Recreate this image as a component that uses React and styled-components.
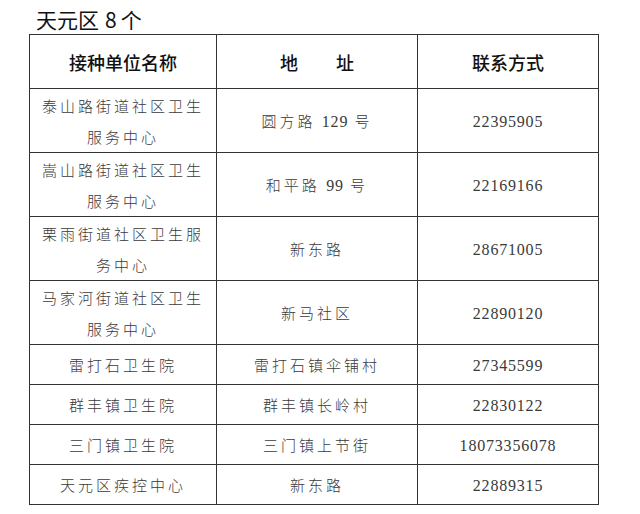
import React from 'react';
import styled, { createGlobalStyle } from 'styled-components';

const GlobalStyle = createGlobalStyle`
  html, body {
    margin: 0;
    padding: 0;
    background: #fff;
  }
  body {
    font-family: "Noto Sans CJK SC", "Noto Sans", sans-serif;
    color: #333;
  }
`;

const Page = styled.div`
  width: 640px;
  height: 514px;
  overflow: hidden;
`;

const Title = styled.div`
  height: 34px;
  padding-left: 36px;
  font-size: 21px;
  line-height: 38px;
  color: #111;
  box-sizing: border-box;
`;

const Count = styled.span`
  margin: 0 4px 0 6px;
`;

const Table = styled.table`
  margin-left: 29px;
  border-collapse: collapse;
  table-layout: fixed;
  width: 569px;
`;

const HeadCell = styled.th`
  height: 53px;
  border: 1px solid #333;
  font-size: 18px;
  font-weight: 500;
  color: #111;
  padding: 0;
  text-align: center;
  word-spacing: ${(p) => p.$spread || 0};
`;

const Cell = styled.td`
  height: ${(p) => (p.$tall ? '63px' : '39px')};
  border: 1px solid #333;
  padding: 0 6px;
  text-align: center;
  font-size: 15px;
  line-height: 31px;
  letter-spacing: 3px;
  color: #3a3a3a;
  font-weight: 300;
`;

const Num = styled.span`
  font-family: "Liberation Serif", "Times New Roman", serif;
  font-size: 16px;
  letter-spacing: 0.8px;
  font-weight: 400;
`;

const rows = [
  { name: ['泰山路街道社区卫生', '服务中心'], addr: ['圆方路 ', '129', ' 号'], tel: '22395905', tall: true },
  { name: ['嵩山路街道社区卫生', '服务中心'], addr: ['和平路 ', '99', ' 号'], tel: '22169166', tall: true },
  { name: ['栗雨街道社区卫生服', '务中心'], addr: ['新东路'], tel: '28671005', tall: true },
  { name: ['马家河街道社区卫生', '服务中心'], addr: ['新马社区'], tel: '22890120', tall: true },
  { name: ['雷打石卫生院'], addr: ['雷打石镇伞铺村'], tel: '27345599' },
  { name: ['群丰镇卫生院'], addr: ['群丰镇长岭村'], tel: '22830122' },
  { name: ['三门镇卫生院'], addr: ['三门镇上节街'], tel: '18073356078' },
  { name: ['天元区疾控中心'], addr: ['新东路'], tel: '22889315' },
];

const Address = ({ parts }) => {
  if (parts.length === 1) return <>{parts[0]}</>;
  return (
    <>
      {parts[0]}
      <Num>{parts[1]}</Num>
      {parts[2]}
    </>
  );
};

export default function App() {
  return (
    <Page>
      <GlobalStyle />
      <Title>
        天元区<Count>8</Count>个
      </Title>
      <Table>
        <colgroup>
          <col style={{ width: '187px' }} />
          <col style={{ width: '201px' }} />
          <col style={{ width: '181px' }} />
        </colgroup>
        <thead>
          <tr>
            <HeadCell>接种单位名称</HeadCell>
            <HeadCell $spread="34px">地 址</HeadCell>
            <HeadCell>联系方式</HeadCell>
          </tr>
        </thead>
        <tbody>
          {rows.map((r, i) => (
            <tr key={i}>
              <Cell $tall={r.tall}>
                {r.name.map((line, j) => (
                  <div key={j}>{line}</div>
                ))}
              </Cell>
              <Cell $tall={r.tall}>
                <Address parts={r.addr} />
              </Cell>
              <Cell $tall={r.tall}>
                <Num>{r.tel}</Num>
              </Cell>
            </tr>
          ))}
        </tbody>
      </Table>
    </Page>
  );
}
